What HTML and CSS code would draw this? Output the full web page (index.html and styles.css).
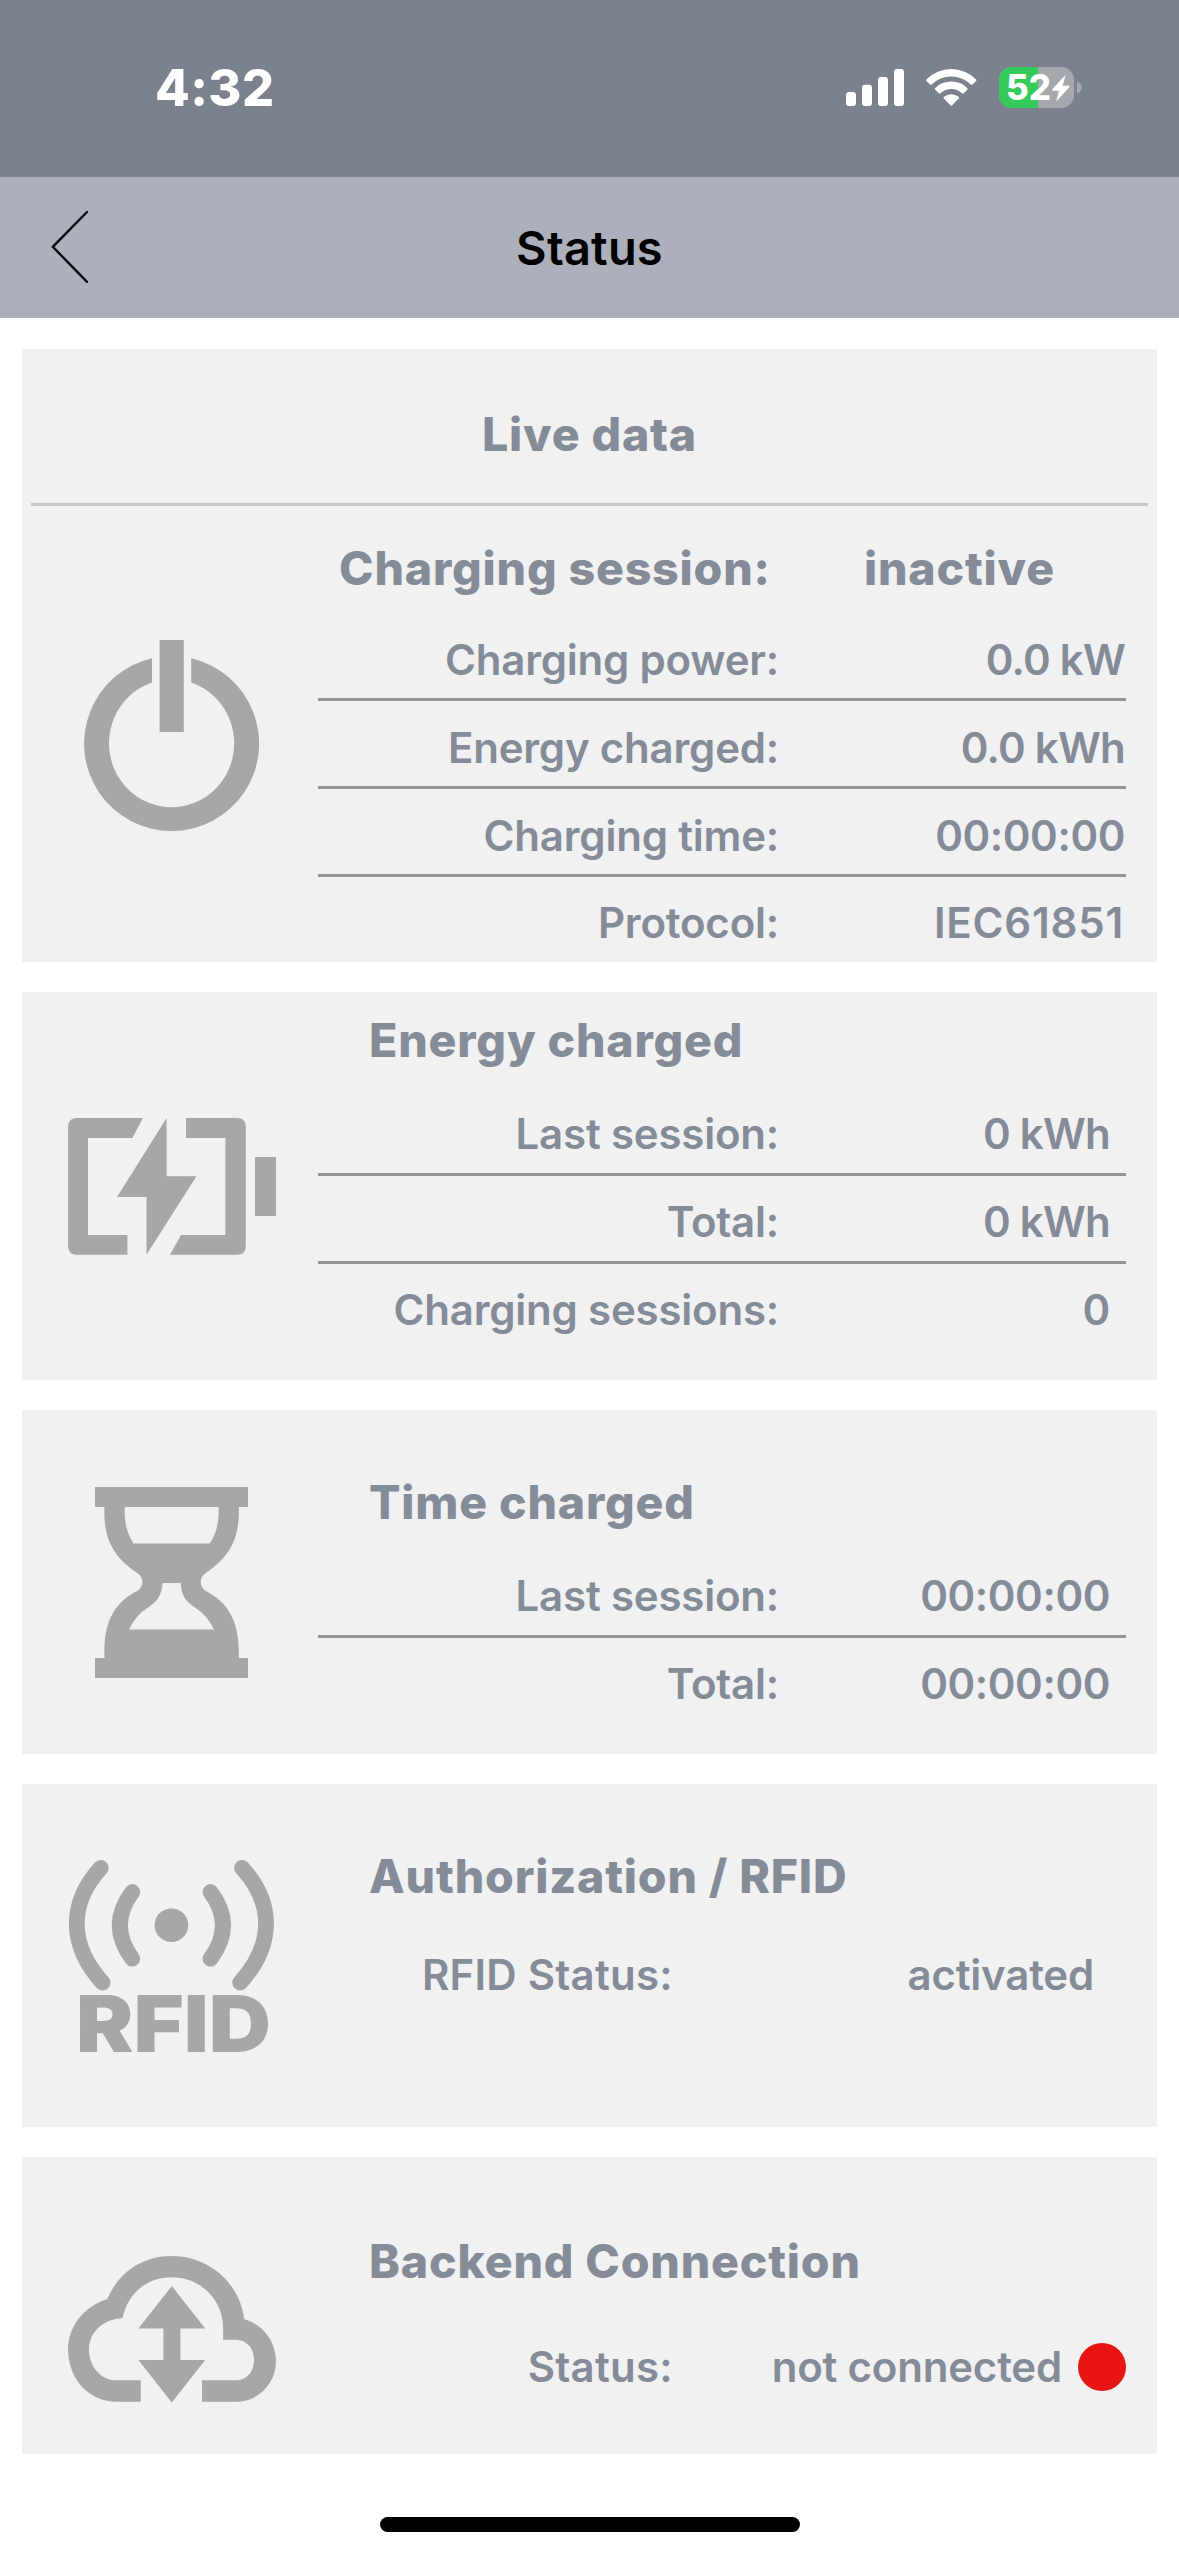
FILE: index.html
```html
<!DOCTYPE html>
<html lang="en">
<head>
<meta charset="utf-8">
<title>Status</title>
<link rel="stylesheet" href="styles.css">
</head>
<body>
<div class="statusbar">
  <span class="clock">4:32</span>
  <svg class="indicators" width="240" height="60" viewBox="844 58 240 60" aria-hidden="true">
    <g fill="#fff">
      <rect x="846" y="92" width="10" height="14" rx="3"/>
      <rect x="862" y="84.7" width="10" height="21.3" rx="3"/>
      <rect x="878" y="77" width="10" height="29" rx="3"/>
      <rect x="894" y="69" width="10" height="37" rx="3"/>
      <path d="M926.6 81.2Q925.6 80.2 926.6 79.2A35 35 0 0 1 975.9 79.2Q976.9 80.2 975.9 81.2L972.4 84.4Q971.6 85.1 970.8 84.4A28 28 0 0 0 931.7 84.4Q930.9 85.1 930.1 84.4Z"/>
      <path d="M935.2 89.8Q934.4 88.9 935.3 88A22.6 22.6 0 0 1 967.2 88Q968.1 88.9 967.3 89.8L963.7 93.3Q963 94 962.1 93.3A16 16 0 0 0 940.4 93.3Q939.5 94 938.8 93.3Z"/>
      <path d="M943.8 98.5Q943 97.6 943.9 96.8A11.5 11.5 0 0 1 958.6 96.8Q959.5 97.6 958.7 98.5L952.2 105.2Q951.3 106.1 950.4 105.2Z"/>
    </g>
    <clipPath id="cell"><rect x="999" y="67" width="75" height="41" rx="12.5"/></clipPath>
    <g clip-path="url(#cell)">
      <rect x="999" y="67" width="75" height="41" fill="#a6a8af"/>
      <rect x="999" y="67" width="39" height="41" fill="#35cb5a"/>
    </g>
    <path d="M1077 81.5Q1081.6 83.2 1081.6 87.5T1077 93.5Z" fill="#a6a8af"/>
    <text class="percent" x="1006" y="100" textLength="45" lengthAdjust="spacingAndGlyphs">52</text>
    <path d="M1065 75.8 1052.6 89.3Q1052 90.4 1053.2 90.4H1059.4L1056.7 100.6 1069 87.2Q1069.8 86 1068.4 86H1062.3Z" fill="#fff" stroke="#fff" stroke-width=".6"/>
  </svg>
</div>
<header class="navbar">
  <svg class="back" width="42" height="78" viewBox="49 208.500 42 78" fill="none" stroke="#0b0d16" stroke-width="2.4" stroke-linecap="round"><path d="M87 211.5 52.8 246.3 87 281.3"/></svg>
  <h1 class="page-title">Status</h1>
</header>
<main class="cards">
  <section class="card card-live">
    <h2 class="card-head">Live data</h2>
    <div class="card-body">
      <svg class="icon" viewBox="22 506 296 456" aria-hidden="true">
        <path d="M152 658.3A87.5 87.5 0 1 0 191.2 658.3V682.5A62.6 64 0 1 1 152 682.5Z"/>
        <rect x="159.6" y="640" width="24.2" height="92"/>
      </svg>
      <div class="rows">
        <div class="session"><span class="session-label">Charging session:</span><span>inactive</span></div>
        <div class="row"><span class="label">Charging power:</span><span class="value amount">0.0 kW</span></div>
        <div class="row"><span class="label">Energy charged:</span><span class="value amount">0.0 kWh</span></div>
        <div class="row"><span class="label">Charging time:</span><span class="value time">00:00:00</span></div>
        <div class="row"><span class="label">Protocol:</span><span class="value protocol">IEC61851</span></div>
      </div>
    </div>
  </section>
  <section class="card card-energy">
    <svg class="icon" viewBox="22 992 296 388" aria-hidden="true">
      <path d="M143 1118 132.4 1138H88V1235H127.4V1254.7H77Q68.1 1254.7 68.1 1246V1126.7Q68.1 1118 77 1118Z"/>
      <path d="M186 1118H237Q245.8 1118 245.8 1126.7V1246Q245.8 1254.7 237 1254.7H170L181 1235H225.4V1138H186Z"/>
      <path d="M166.6 1118V1176.3H196.4L146.5 1254.7V1197H117Z"/>
      <rect x="255" y="1157" width="21" height="59"/>
    </svg>
    <div class="rows">
      <h2 class="title">Energy charged</h2>
      <div class="row"><span class="label">Last session:</span><span class="value amount">0 kWh</span></div>
      <div class="row"><span class="label">Total:</span><span class="value amount">0 kWh</span></div>
      <div class="row"><span class="label">Charging sessions:</span><span class="value">0</span></div>
    </div>
  </section>
  <section class="card card-time">
    <svg class="icon" viewBox="22 1410 296 343.5" aria-hidden="true">
      <path fill-rule="evenodd" d="M95 1487H248V1507H238.8C240 1538 230 1557 205 1573.500Q200.700 1577 200.700 1582T205 1590.500C228 1602 240 1621 238.800 1658H248V1678H95V1658H104.500C103 1621 115 1602 138 1590.500Q142.400 1587 142.400 1582T138 1573.500C113 1557 103 1538 104.500 1507H95ZM124.800 1507Q123.500 1529 133.600 1543.500H209.700Q219.800 1529 218.500 1507ZM162.500 1583C162 1595 157 1602 148 1607.500Q136 1615 129 1629.400H214Q207 1615 195 1607.500C186 1602 181 1595 180.700 1583Z"/>
    </svg>
    <div class="rows">
      <h2 class="title">Time charged</h2>
      <div class="row"><span class="label">Last session:</span><span class="value time">00:00:00</span></div>
      <div class="row"><span class="label">Total:</span><span class="value time">00:00:00</span></div>
    </div>
  </section>
  <section class="card card-rfid">
    <svg class="icon" viewBox="22 1784 296 343" aria-hidden="true">
      <circle cx="171.400" cy="1925.200" r="16.800"/>
      <g fill="none" stroke="#a7a7a7" stroke-width="15.800" stroke-linecap="round">
        <path d="M132.300 1892Q107.300 1925.300 132.300 1958.700"/>
        <path d="M210.500 1892Q235.500 1925.300 210.500 1958.700"/>
        <path d="M100.800 1867.800C68.500 1903 68.500 1945 102.600 1982.600"/>
        <path d="M242 1867.800C274.300 1903 274.300 1945 240.200 1982.600"/>
      </g>
      <text class="rfid" x="76" y="2051.700" textLength="195" lengthAdjust="spacingAndGlyphs">RFID</text>
    </svg>
    <div class="rows">
      <h2 class="title">Authorization / RFID</h2>
      <div class="state"><span class="label">RFID Status:</span><span class="value">activated</span></div>
    </div>
  </section>
  <section class="card card-backend">
    <svg class="icon" viewBox="22 2157 296 297" aria-hidden="true">
      <path d="M140.800 2401.700H116.700C89 2401.700 68.100 2379 68.100 2349.500C68.100 2326 85 2305.500 107.200 2299.300C118 2273 142 2256 171.400 2256C209 2256 240 2283 244.200 2319.300C262 2323.500 276 2341 276 2361C276 2383 259 2401.700 236 2401.700H202V2380.300H236C246.500 2380.300 254.100 2371.500 254.100 2360C254.100 2348.500 246.500 2339.700 236 2339.700H223.100V2328C223.100 2299 200 2277.300 171.400 2277.300C147 2277.300 128 2293 122.500 2318C103 2319.500 89 2332 89 2349.500C89 2367 101 2380.300 116.700 2380.300H140.800Z"/>
      <path d="M171.800 2286 205.200 2328.500H180.400V2360H205.200L171.800 2402.500 138.400 2360H163.400V2328.500H138.400Z"/>
    </svg>
    <div class="rows">
      <h2 class="title">Backend Connection</h2>
      <div class="state"><span class="label">Status:</span><span class="value">not connected</span><i class="lamp"></i></div>
    </div>
  </section>
</main>
<div class="home-bar"></div>
</body>
</html>
```

FILE: styles.css
```css
* { box-sizing: border-box; }
body {
  margin: 0;
  width: 1179px;
  height: 2556px;
  background: #fff;
  font-family: Inter, "Liberation Sans", sans-serif;
  color: #858b97;
  overflow: hidden;
}
h1, h2 { margin: 0; }
span { white-space: nowrap; }

.statusbar {
  height: 177px;
  padding: 58px 95px 0 155px;
  background: #7c818e;
  display: flex;
  justify-content: space-between;
}
.clock {
  font-size: 50.5px;
  font-weight: 800;
  letter-spacing: .4px;
  line-height: 60px;
  color: #fff;
}
.percent { font-size: 35px; font-weight: 800; fill: #fff; }
.rfid { font-size: 79px; font-weight: 900; }

.navbar {
  height: 141px;
  background: #abb0bb;
  display: grid;
  grid-template-columns: 49px 42px 1fr 91px;
  align-items: center;
}
.back { grid-column: 2; }
.page-title {
  font-size: 47px;
  font-weight: 600;
  letter-spacing: .2px;
  line-height: 60px;
  text-align: center;
  color: #000;
}

.cards {
  padding: 31px 22px 0;
  display: flex;
  flex-direction: column;
}
.card {
  display: grid;
  grid-template-columns: 296px 808px;
  background: #f1f1f1;
}
.cards .card { width: 1135px; }
.card-live { display: block; height: 613px; margin-bottom: 30px; }
.card-energy { height: 388px; margin-bottom: 30px; }
.card-time { height: 343.5px; margin-bottom: 30.5px; }
.card-rfid { height: 343px; margin-bottom: 30px; }
.card-backend { height: 297px; }
.card-body { display: grid; grid-template-columns: 296px 808px; }
.icon { display: block; width: 100%; height: 100%; fill: #a7a7a7; }

.card-head {
  margin: 0 9px;
  height: 157px;
  padding-top: 16px;
  border-bottom: 3px solid #c6c6c6;
  line-height: 138px;
  text-align: center;
}
.card-head, .session, .title {
  font-size: 46.5px;
  font-weight: 800;
  letter-spacing: .82px;
}
.session {
  display: flex;
  height: 107px;
  padding: 18px 0 0 21px;
  line-height: 89px;
}
.session-label { width: 525px; }

.title { padding-left: 51px; }
.card-energy .title { height: 96px; line-height: 96px; }
.card-time .title, .card-rfid .title { height: 140px; padding-top: 45px; line-height: 95px; }
.card-backend .title { height: 140px; padding-top: 69px; line-height: 71px; }

.row {
  display: grid;
  grid-template-columns: 461px 1fr;
  height: 88px;
  padding: 6px 16px 0 0;
  border-bottom: 3px solid #959595;
  line-height: 79px;
}
.row, .state {
  font-size: 42px;
  font-weight: 600;
  letter-spacing: -.2px;
  text-align: right;
}
.row:last-child { border-bottom: 0; }
.card-live .row { padding: 8px 1px 0 0; line-height: 77px; }
.card-live .row:last-child { height: 85px; padding-top: 6px; line-height: 79px; }
.amount { letter-spacing: -.75px; }
.time { letter-spacing: -.4px; }
.protocol { padding-right: 1px; letter-spacing: .8px; }

.state {
  display: grid;
  grid-template-columns: 355px 1fr;
  align-items: center;
  height: 101px;
  padding-right: 32px;
  line-height: 102px;
}
.state .label { letter-spacing: .25px; }
.card-backend .state {
  grid-template-columns: 355px 1fr 48px;
  height: 139px;
  padding-right: 0;
  line-height: 139px;
}
.card-backend .value { padding-right: 16px; }
.lamp { width: 48px; height: 48px; border-radius: 50%; background: #e91414; }

.home-bar {
  width: 420px;
  height: 15px;
  margin: 63px 0 0 380px;
  border-radius: 8px;
  background: #000;
}
```
